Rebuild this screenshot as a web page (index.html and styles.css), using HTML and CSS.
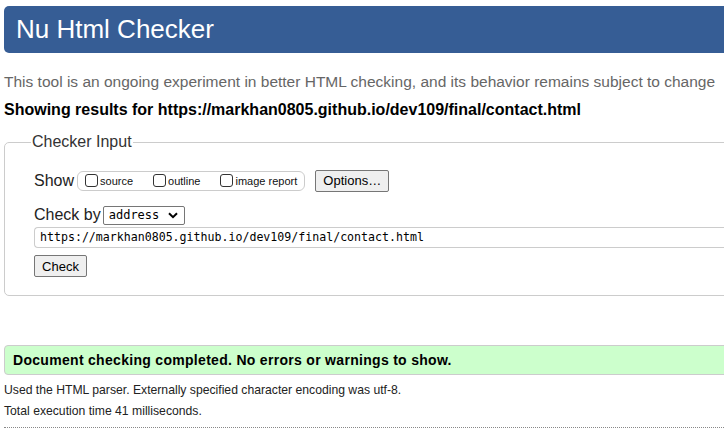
FILE: index.html
```html
<!DOCTYPE html>
<html>
<head>
<meta charset="utf-8">
<title>Nu Html Checker</title>
<link rel="stylesheet" href="styles.css">
</head>
<body>
<div class="page">
  <h1 class="banner">Nu Html Checker</h1>
  <p class="intro">This tool is an ongoing experiment in better HTML checking, and its behavior remains subject to change</p>
  <p class="results-for">Showing results for https://markhan0805.github.io/dev109/final/contact.html</p>
  <form class="checker">
    <fieldset class="fs">
      <legend class="legend">Checker Input</legend>
      <div class="row show-row">
        <span class="label">Show</span>
        <span class="opts">
          <label class="opt"><input type="checkbox" class="cb">source</label>
          <label class="opt"><input type="checkbox" class="cb">outline</label>
          <label class="opt"><input type="checkbox" class="cb">image report</label>
        </span>
        <button type="button" class="btn opt-btn">Options…</button>
      </div>
      <div class="row by-row">
        <span class="label">Check by</span>
        <span class="select">address<svg class="chev" width="10" height="7" viewBox="0 0 10 7"><path d="M1 1.2 L5 5.2 L9 1.2" fill="none" stroke="#000" stroke-width="2"/></svg></span>
      </div>
      <div class="url">https://markhan0805.github.io/dev109/final/contact.html</div>
      <button type="button" class="btn check-btn">Check</button>
    </fieldset>
  </form>
  <p class="success">Document checking completed. No errors or warnings to show.</p>
  <p class="meta first">Used the HTML parser. Externally specified character encoding was utf-8.</p>
  <p class="meta">Total execution time 41 milliseconds.</p>
  <div class="dots"></div>
</div>
</body>
</html>
```
FILE: styles.css
```css
html, body { margin: 0; padding: 0; overflow: hidden; background: #fff; }
body { font-family: "Liberation Sans", Arial, sans-serif; color: #000; }
.page { width: 760px; padding: 6px 0 0 4px; }
.banner {
  margin: 0;
  height: 47px;
  box-sizing: border-box;
  background: #365d95;
  color: #fff;
  font-weight: normal;
  font-size: 26px;
  line-height: 47px;
  padding-left: 12px;
  border-radius: 5px;
}
.intro { margin: 0; padding-top: 20px; font-size: 15.5px; line-height: 18px; color: #666; white-space: nowrap; }
.results-for { margin: 0; padding-top: 10px; font-size: 16px; line-height: 18px; font-weight: bold; }
.checker { margin: 0; padding-top: 14px; }
.fs {
  margin: 0;
  border: 1px solid #ccc;
  border-radius: 5px;
  padding: 18px 0 18px 29px;
  min-width: 0;
}
.legend { font-size: 16px; color: #333; padding: 0 1px; margin-left: -3px; line-height: 18px; }
.row { display: flex; align-items: center; }
.label { font-size: 16px; line-height: 18px; color: #222; }
.show-row { height: 23px; }
.opts {
  display: flex;
  align-items: center;
  height: 20px;
  box-sizing: border-box;
  border: 1px solid #ccc;
  border-radius: 6px;
  margin-left: 3px;
  padding: 0 7px 0 7px;
  gap: 20px;
}
.opt { display: flex; align-items: center; font-size: 11px; color: #111; }
.cb {
  appearance: none;
  width: 13px; height: 13px;
  margin: 0 2px 0 0;
  border: 1px solid #333;
  border-radius: 3px;
  background: #fff;
}
.btn {
  font-family: "Liberation Sans", Arial, sans-serif;
  font-size: 13px;
  background: #efefef;
  border: 1px solid #767676;
  border-radius: 2px;
  color: #000;
  padding: 0 6px;
  height: 22px;
}
.opt-btn { margin-left: 10px; width: 74px; }
.by-row { margin-top: 14px; height: 18px; }
.select {
  margin-left: 2px;
  display: flex;
  align-items: center;
  justify-content: space-between;
  box-sizing: border-box;
  width: 82px; height: 19px;
  border: 1px solid #767676;
  border-radius: 2px;
  padding: 0 6px 0 5px;
  font-family: "DejaVu Sans Mono", monospace;
  font-size: 12px;
}
.url {
  margin-top: 3px;
  box-sizing: border-box;
  height: 21px;
  border: 1px solid #ccc;
  border-right: none;
  border-radius: 4px 0 0 4px;
  padding-left: 5px;
  font-family: "DejaVu Sans Mono", monospace;
  font-size: 11.6px;
  line-height: 19px;
}
.check-btn { display: block; margin-top: 7px; width: 53px; height: 22px; }
.success {
  margin: 49px 0 0 0;
  height: 30px;
  box-sizing: border-box;
  background: #ccffcc;
  border: 1px solid #ccc;
  border-radius: 4px 0 0 4px;
  padding-left: 8px;
  font-weight: bold;
  font-size: 14px;
  line-height: 28px;
  letter-spacing: 0.3px;
}
.meta { margin: 0; padding-top: 6px; font-size: 12.2px; line-height: 15px; color: #222; }
.meta.first { padding-top: 8px; }
.dots { margin-top: 8px; border-top: 1px dotted #888; }
```
